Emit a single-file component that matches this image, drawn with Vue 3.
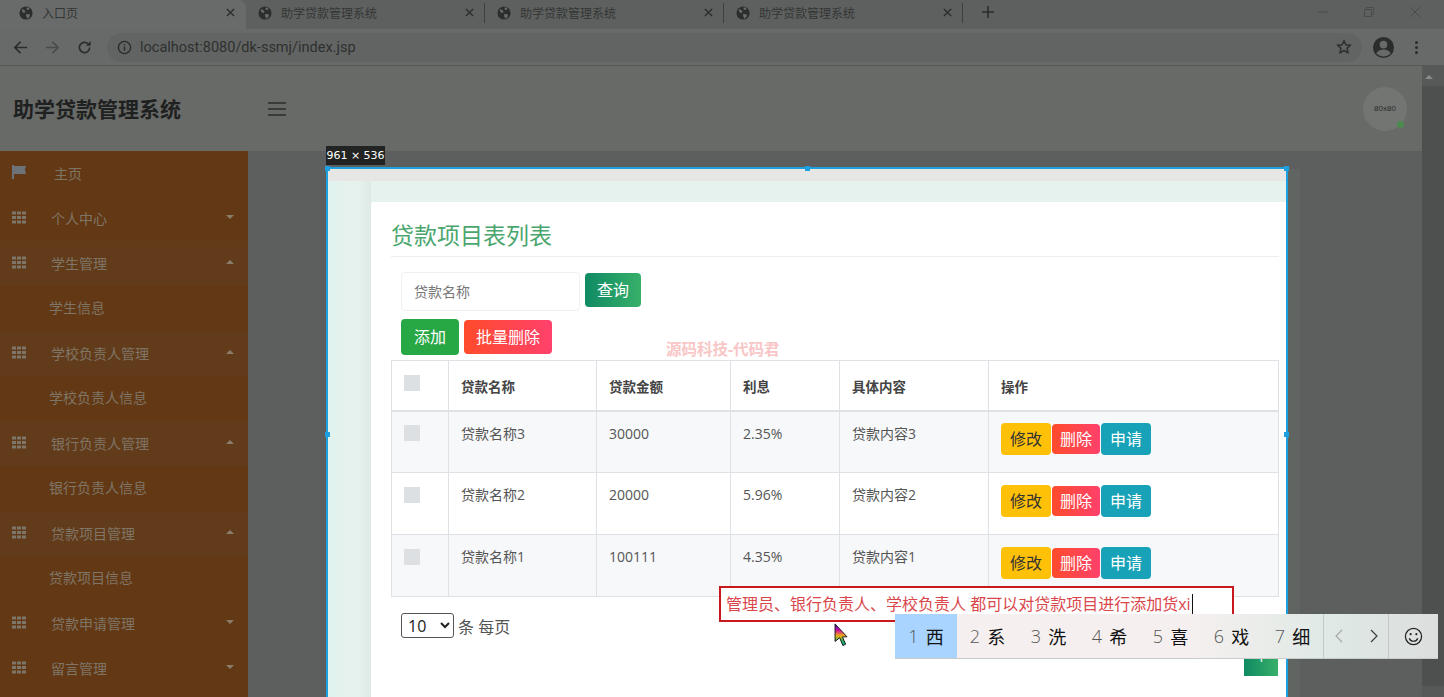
<script setup>
const tabs = [
    { title: '入口页', active: true },
    { title: '助学贷款管理系统' },
    { title: '助学贷款管理系统' },
    { title: '助学贷款管理系统' }
];

const menu = [
    { label: '主页', icon: 'flag', home: true },
    { label: '个人中心', icon: 'grid', arrow: 'down' },
    { label: '学生管理', icon: 'grid', arrow: 'up', open: true },
    { label: '学生信息', sub: true },
    { label: '学校负责人管理', icon: 'grid', arrow: 'up', open: true },
    { label: '学校负责人信息', sub: true },
    { label: '银行负责人管理', icon: 'grid', arrow: 'up', open: true },
    { label: '银行负责人信息', sub: true },
    { label: '贷款项目管理', icon: 'grid', arrow: 'up', open: true },
    { label: '贷款项目信息', sub: true },
    { label: '贷款申请管理', icon: 'grid', arrow: 'down' },
    { label: '留言管理', icon: 'grid', arrow: 'down' }
];

const loans = [
    { name: '贷款名称3', amount: '30000', rate: '2.35%', content: '贷款内容3' },
    { name: '贷款名称2', amount: '20000', rate: '5.96%', content: '贷款内容2' },
    { name: '贷款名称1', amount: '100111', rate: '4.35%', content: '贷款内容1' }
];

const candidates = ['西', '系', '洗', '希', '喜', '戏', '细'];
</script>

<template>
    <div class="screen">
        <div class="tabbar">
            <div v-for="tab in tabs" :key="tab.title + tab.active" :class="['tab', { active: tab.active }]">
                <svg class="globe" viewBox="0 0 16 16">
                    <circle cx="8" cy="8" r="7.5" fill="#2c2e2e" />
                    <path d="M3 3.5l3 1 1.5 2-1.5 1.500-2-1zM9 1.500l3 1-1 2-2.500-.5zM8 9l4 .5.500 2-2.500 3-1.500-2z" fill="#6a6c6b" />
                </svg>
                <span class="tab-title">{{ tab.title }}</span>
                <svg class="tab-close" viewBox="0 0 10 10">
                    <path d="M1 1l8 8M9 1l-8 8" stroke="#2b2d2d" stroke-width="1.500" />
                </svg>
            </div>
            <svg class="new-tab" viewBox="0 0 12 12">
                <path d="M6 0v12M0 6h12" stroke="#2b2d2d" stroke-width="1.600" />
            </svg>
            <div class="win-controls">
                <svg viewBox="0 0 12 12"><path d="M1 6h10" stroke="#4a4c4b" /></svg>
                <svg viewBox="0 0 12 12"><path d="M1.500 3.500h7v7h-7zM3.500 3.500v-2h7v7h-2" fill="none" stroke="#4a4c4b" /></svg>
                <svg viewBox="0 0 12 12"><path d="M1 1l10 10M11 1l-10 10" stroke="#4a4c4b" /></svg>
            </div>
        </div>

        <div class="toolbar">
            <svg class="tool" viewBox="0 0 16 16"><path d="M15 8H2M8 2L2 8l6 6" fill="none" stroke="#2b2d2d" stroke-width="1.800" /></svg>
            <svg class="tool" viewBox="0 0 16 16"><path d="M1 8h13M8 2l6 6-6 6" fill="none" stroke="#4a4c4b" stroke-width="1.800" /></svg>
            <svg class="tool" viewBox="0 0 16 16"><path d="M13.500 8a5.500 5.500 0 1 1-1.600-3.900" fill="none" stroke="#2b2d2d" stroke-width="1.800" /><path d="M14.500 1v5h-5z" fill="#2b2d2d" /></svg>
            <div class="omnibox">
                <svg class="info" viewBox="0 0 16 16">
                    <circle cx="8" cy="8" r="6.500" fill="none" stroke="#2b2d2d" stroke-width="1.500" />
                    <path d="M8 7v4.500M8 4.200v1.500" stroke="#2b2d2d" stroke-width="1.500" />
                </svg>
                <span class="url">localhost:8080/dk-ssmj/index.jsp</span>
                <svg class="star" viewBox="0 0 16 16">
                    <path d="M8 1.800l1.900 4 4.400.5-3.200 3 .8 4.400L8 11.600l-3.900 2.100.8-4.400-3.200-3 4.400-.5z" fill="none" stroke="#2b2d2d" stroke-width="1.400" />
                </svg>
            </div>
            <svg class="profile" viewBox="0 0 24 24">
                <circle cx="12" cy="12" r="11" fill="#2b2d2d" />
                <circle cx="12" cy="9" r="4" fill="#686a69" />
                <path d="M4.500 18c2-3 4.500-4 7.500-4s5.500 1 7.500 4c-2 2.200-4.500 3.300-7.500 3.300s-5.500-1.100-7.500-3.300z" fill="#686a69" />
            </svg>
            <div class="dots"><i></i><i></i><i></i></div>
        </div>

        <div class="page">
            <div class="page-left">
                <header class="header">
                    <div class="brand">助学贷款管理系统</div>
                    <div class="hamburger"><i></i><i></i><i></i></div>
                    <div class="avatar">
                        80x80
                        <span class="online"></span>
                    </div>
                </header>

                <div class="body">
                    <aside class="sidebar">
                        <div
                            v-for="item in menu"
                            :key="item.label"
                            :class="['menu-item', { open: item.open, sub: item.sub, home: item.home }]"
                        >
                            <svg v-if="item.icon === 'flag'" class="menu-icon flag" viewBox="0 0 14 14">
                                <path d="M0 0h2v14H0zM2 1h12l-1 3.500L14 9H2z" fill="#6d7378" />
                            </svg>
                            <svg v-else-if="item.icon === 'grid'" class="menu-icon" viewBox="0 0 14 12">
                                <path d="M0 0h4v3H0zM5 0h4v3H5zM10 0h4v3h-4zM0 4.500h4v3H0zM5 4.500h4v3H5zM10 4.500h4v3h-4zM0 9h4v3H0zM5 9h4v3H5zM10 9h4v3h-4z" fill="#7d7669" />
                            </svg>
                            <span class="menu-label">{{ item.label }}</span>
                            <span v-if="item.arrow" :class="['caret', item.arrow]"></span>
                        </div>
                    </aside>

                    <main class="content">
                        <div class="capture-label">961 × 536</div>
                        <div class="capture">
                            <i class="handle top-left"></i>
                            <i class="handle top-mid"></i>
                            <i class="handle top-right"></i>
                            <i class="handle mid-left"></i>
                            <i class="handle mid-right"></i>
                            <div class="capture-strip"></div>
                            <div class="capture-body">
                                <section class="card">
                                    <h2 class="card-title">贷款项目表列表</h2>
                                    <div class="search-row">
                                        <div class="search-input">贷款名称</div>
                                        <button class="btn btn-query">查询</button>
                                    </div>
                                    <div class="action-row">
                                        <button class="btn btn-add">添加</button>
                                        <button class="btn btn-batch">批量删除</button>
                                    </div>
                                    <div class="watermark">源码科技-代码君</div>
                                    <table class="loan-table">
                                        <colgroup>
                                            <col style="width: 57px" />
                                            <col style="width: 148px" />
                                            <col style="width: 134px" />
                                            <col style="width: 109px" />
                                            <col style="width: 149px" />
                                            <col />
                                        </colgroup>
                                        <thead>
                                            <tr>
                                                <th><span class="check"></span></th>
                                                <th>贷款名称</th>
                                                <th>贷款金额</th>
                                                <th>利息</th>
                                                <th>具体内容</th>
                                                <th>操作</th>
                                            </tr>
                                        </thead>
                                        <tbody>
                                            <tr v-for="loan in loans" :key="loan.name">
                                                <td><span class="check"></span></td>
                                                <td>{{ loan.name }}</td>
                                                <td>{{ loan.amount }}</td>
                                                <td>{{ loan.rate }}</td>
                                                <td>{{ loan.content }}</td>
                                                <td class="ops">
                                                    <button class="op op-edit">修改</button>
                                                    <button class="op op-del">删除</button>
                                                    <button class="op op-apply">申请</button>
                                                </td>
                                            </tr>
                                        </tbody>
                                    </table>
                                    <div class="pager-row">
                                        <select class="page-size">
                                            <option>10</option>
                                        </select>
                                        <span>条 每页</span>
                                    </div>
                                    <div class="pagination"><span class="page-btn">1</span></div>
                                </section>
                            </div>
                        </div>
                    </main>
                </div>
            </div>

            <div class="scrollbar">
                <span class="scroll-up"></span>
                <span class="scroll-thumb"></span>
            </div>
        </div>

        <div class="note">管理员、银行负责人、学校负责人 都可以对贷款项目进行添加货xi<i class="text-caret"></i></div>

        <svg class="mouse" viewBox="0 0 16 26">
            <defs>
                <linearGradient id="mouse-fill" x1="0" y1="0" x2="0" y2="1">
                    <stop offset="0" stop-color="#3a10c0" />
                    <stop offset="0.3" stop-color="#d0109a" />
                    <stop offset="0.55" stop-color="#f0b010" />
                    <stop offset="0.8" stop-color="#20b060" />
                    <stop offset="1" stop-color="#10a0a0" />
                </linearGradient>
            </defs>
            <path d="M1 1l13 14H9l3.500 8-3 1.500L6 16l-5 4z" fill="url(#mouse-fill)" stroke="#111" stroke-width="1" />
        </svg>

        <div class="ime">
            <div
                v-for="(word, i) in candidates"
                :key="word"
                :class="['candidate', { picked: i === 0 }]"
            >
                <span class="num">{{ i + 1 }}</span>
                <span class="word">{{ word }}</span>
            </div>
            <div class="ime-nav">
                <svg viewBox="0 0 8 14"><path d="M7 1L1 7l6 6" fill="none" stroke="#a4aaa8" stroke-width="1.200" /></svg>
                <svg viewBox="0 0 8 14"><path d="M1 1l6 6-6 6" fill="none" stroke="#3c3e3e" stroke-width="1.200" /></svg>
            </div>
            <div class="ime-emoji">
                <svg viewBox="0 0 20 20">
                    <circle cx="10" cy="10" r="8.500" fill="none" stroke="#222" stroke-width="1.300" />
                    <circle cx="7" cy="7.500" r="1.100" fill="#222" />
                    <circle cx="13" cy="7.500" r="1.100" fill="#222" />
                    <path d="M5.500 12c1 2 2.700 3 4.500 3s3.500-1 4.500-3" fill="none" stroke="#222" stroke-width="1.300" />
                </svg>
            </div>
        </div>
    </div>
</template>

<style scoped>
.screen {
    position: relative;
    width: 1444px;
    height: 697px;
    overflow: hidden;
    background: #5c5f5d;
    font-family: "Open Sans", "Noto Sans CJK SC", sans-serif;
    color: #333;
}

.tabbar {
    display: flex;
    align-items: center;
    height: 29px;
    background: #5e605f;
}

.tab {
    position: relative;
    display: flex;
    align-items: center;
    width: 239px;
    height: 29px;
    flex-shrink: 0;
    padding: 0 11px 4px 12px;
    box-sizing: border-box;
}

.tab::after {
    content: "";
    position: absolute;
    right: 0;
    top: 3px;
    width: 1px;
    height: 20px;
    background: #3e403f;
}

.tab:first-child {
    width: 246px;
    padding-left: 19px;
    background: #696b6a;
    border-radius: 0 8px 0 0;
}

.tab:first-child::after {
    display: none;
}

.globe {
    width: 14px;
    height: 14px;
    flex-shrink: 0;
}

.tab-title {
    flex: 1;
    margin-left: 9px;
    font-size: 12px;
    color: #333635;
}

.tab-close {
    width: 9px;
    height: 9px;
}

.new-tab {
    width: 12px;
    height: 12px;
    margin-left: 19px;
    margin-top: -5px;
}

.win-controls {
    display: flex;
    gap: 34px;
    margin-left: auto;
    margin-right: 23px;
    margin-top: -6px;
}

.win-controls svg {
    width: 12px;
    height: 12px;
}

.toolbar {
    display: flex;
    align-items: center;
    height: 37px;
    padding: 0 0 0 13px;
    box-sizing: border-box;
    background: #686a69;
    border-bottom: 1px solid #565857;
}

.tool {
    width: 15px;
    height: 15px;
    margin-right: 17px;
}

.omnibox {
    display: flex;
    align-items: center;
    width: 1255px;
    height: 29px;
    margin-left: -2px;
    padding: 0 9px 0 10px;
    box-sizing: border-box;
    border-radius: 15px;
    background: #626463;
}

.info {
    width: 15px;
    height: 15px;
}

.url {
    flex: 1;
    margin-left: 8px;
    font-family: "Roboto", sans-serif;
    font-size: 14.500px;
    color: #2e302f;
}

.star {
    width: 16px;
    height: 16px;
    margin-right: 1px;
}

.profile {
    width: 23px;
    height: 23px;
    margin-left: 10px;
}

.dots {
    display: flex;
    flex-direction: column;
    gap: 2px;
    margin-left: 20px;
}

.dots i {
    width: 3px;
    height: 3px;
    border-radius: 50%;
    background: #2b2d2d;
}

.page {
    display: flex;
    height: 631px;
}

.page-left {
    width: 1422px;
    flex-shrink: 0;
}

.header {
    display: flex;
    align-items: center;
    height: 85px;
    background: #686a68;
    padding: 0 15px 0 13px;
    box-sizing: border-box;
}

.brand {
    width: 255px;
    margin-top: -2px;
    font-size: 21px;
    font-weight: 700;
    color: #1f2120;
}

.hamburger {
    display: flex;
    flex-direction: column;
    gap: 4px;
}

.hamburger i {
    width: 18px;
    height: 2px;
    background: #3a3c3b;
}

.avatar {
    position: relative;
    display: flex;
    align-items: center;
    justify-content: center;
    width: 44px;
    height: 44px;
    margin-left: auto;
    border-radius: 50%;
    background: #737573;
    font-family: "Liberation Sans", sans-serif;
    font-size: 8px;
    color: #2b2d2c;
}

.online {
    position: absolute;
    right: 3px;
    bottom: 3px;
    width: 7px;
    height: 7px;
    border-radius: 50%;
    background: #4d8a4d;
}

.body {
    display: flex;
    height: 546px;
}

.sidebar {
    width: 248px;
    flex-shrink: 0;
    background: #633814;
}

.menu-item {
    position: relative;
    display: flex;
    align-items: center;
    height: 45px;
    padding: 0 0 2px 12px;
    font-size: 14px;
    color: #7f7566;
    box-sizing: border-box;
}

.menu-item.open {
    background: #623b1a;
}

.menu-icon {
    width: 14px;
    height: 13px;
    margin-top: -1px;
    flex-shrink: 0;
}

.menu-icon.flag {
    height: 14px;
    margin-top: -2px;
}

.menu-label {
    margin-left: 25px;
}

.menu-item.home .menu-label {
    margin-left: 28px;
}

.menu-item.sub {
    padding-left: 49px;
    padding-bottom: 4px;
}

.menu-item.sub .menu-label {
    margin-left: 0;
}

.caret {
    position: absolute;
    right: 14px;
    top: 19px;
    border-left: 4px solid transparent;
    border-right: 4px solid transparent;
}

.caret.down {
    border-top: 4px solid #8a7d6c;
}

.caret.up {
    border-bottom: 4px solid #8a7d6c;
}

.content {
    position: relative;
    flex: 1;
    padding: 16px 0 0 78px;
    background: #5c5f5d;
}

.capture-label {
    position: absolute;
    left: 78px;
    top: -5px;
    width: 59px;
    height: 19px;
    background: #212423;
    color: #fff;
    line-height: 19px;
    text-align: center;
    font-family: "DejaVu Sans", sans-serif;
    white-space: nowrap;
    font-size: 11px;
}

.capture {
    position: relative;
    width: 962px;
    height: 530px;
    border: solid #1d9fe0;
    border-width: 2px 2px 0;
    box-sizing: border-box;
    background: #e6f2ed;
}

.capture::after {
    content: "";
    position: absolute;
    top: 0;
    left: 960px;
    width: 12px;
    height: 100%;
    background: #616562;
}

.handle {
    position: absolute;
    z-index: 2;
    width: 5px;
    height: 5px;
    background: #1d9fe0;
}

.top-left { left: -3px; top: -3px; }
.top-mid { left: 477px; top: -3px; }
.top-right { right: -3px; top: -3px; }
.mid-left { left: -3px; top: 263px; }
.mid-right { right: -3px; top: 263px; }

.capture-strip {
    height: 12px;
    background: #e6e6e4;
}

.capture-body {
    height: 516px;
    padding: 21px 0 0 43px;
    box-sizing: border-box;
    overflow: hidden;
    background: linear-gradient(90deg, #e0f3ef 0, #e6f2ed 20px, #e6f2ed 30px, #dfe9e5 43px, #e6f2ed 43px);
}

.card {
    position: relative;
    width: 928px;
    height: 520px;
    padding: 19px 20px 0 20px;
    box-sizing: border-box;
    background: #fff;
    border-radius: 2px 0 0 0;
}

.card-title {
    margin: 0;
    height: 35px;
    font-size: 23px;
    font-weight: 400;
    line-height: 28px;
    color: #4aa66e;
    border-bottom: 1px solid #eceeef;
    box-sizing: content-box;
}

.search-row {
    display: flex;
    align-items: flex-start;
    gap: 5px;
    margin: 15px 0 0 10px;
}

.search-input {
    width: 179px;
    height: 39px;
    padding-left: 12px;
    box-sizing: border-box;
    border: 1px solid #eef0f1;
    border-radius: 4px;
    font-size: 14px;
    line-height: 37px;
    color: #777;
}

.btn {
    border: none;
    padding: 0 0 2px;
    color: #fff;
    font-family: inherit;
    font-size: 16px;
    border-radius: 4px;
}

.btn-query {
    width: 56px;
    height: 34px;
    margin-top: 1px;
    background: linear-gradient(90deg, #0f8a63, #38b06a);
}

.action-row {
    display: flex;
    align-items: center;
    gap: 5px;
    margin: 8px 0 0 10px;
}

.btn-add {
    width: 58px;
    height: 36px;
    background: #28a745;
}

.btn-batch {
    width: 88px;
    height: 34px;
    background: linear-gradient(90deg, #ff4b2b, #ff416c);
}

.watermark {
    position: absolute;
    left: 295px;
    top: 135px;
    font-size: 15.500px;
    font-weight: 700;
    color: #f9c6c6;
    white-space: nowrap;
}

.loan-table {
    width: 888px;
    margin-top: 5px;
    table-layout: fixed;
    border-collapse: collapse;
    font-size: 14px;
    color: #555;
}

.loan-table th,
.loan-table td {
    padding: 11px 12px;
    border: 1px solid #dee2e6;
    text-align: left;
    vertical-align: top;
    box-sizing: border-box;
}

.loan-table th {
    height: 50px;
    padding-top: 16px;
    font-weight: 700;
    font-size: 13.500px;
    line-height: 20px;
    border-bottom-width: 2px;
    color: #444;
}

.loan-table td {
    height: 62px;
    line-height: 21px;
}

.loan-table th:first-child {
    padding-top: 14px;
}

.loan-table td:first-child {
    padding-top: 14px;
}

.loan-table tbody tr:first-child td:first-child {
    padding-top: 13px;
}

.loan-table tbody tr:nth-child(odd) {
    background: #f7f8fa;
}

.check {
    display: block;
    width: 16px;
    height: 16px;
    background: #dde0e3;
}

.ops {
    font-size: 0;
}

.loan-table td.ops {
    padding: 12px 0 0 12px;
}

.loan-table tbody tr:first-child td.ops {
    padding-top: 11px;
}

.op {
    height: 32px;
    padding: 0 0 2px;
    border: none;
    border-radius: 4px;
    margin-right: 1px;
    font-family: inherit;
    font-size: 16px;
    color: #fff;
    vertical-align: top;
}

.op-edit {
    width: 50px;
    background: #ffc107;
    color: #333;
}

.op-del {
    width: 48px;
    height: 30px;
    margin-top: 1px;
    background: linear-gradient(90deg, #ff4b2b, #ff416c);
}

.op-apply {
    width: 50px;
    background: #17a2b8;
}

.pager-row {
    display: flex;
    align-items: center;
    gap: 4px;
    height: 25px;
    margin: 16px 0 0 10px;
    font-size: 16px;
    color: #555;
}

.page-size {
    width: 53px;
    height: 25px;
    padding: 0 0 0 2px;
    border: 1px solid #555;
    border-radius: 3px;
    background: #fff;
    font-family: "Open Sans", sans-serif;
    font-size: 16px;
    color: #222;
}

.pagination {
    display: flex;
    justify-content: flex-end;
    margin-top: 0;
    padding-right: 1px;
}

.page-btn {
    display: block;
    width: 34px;
    height: 38px;
    background: linear-gradient(90deg, #0f8a63, #38b06a);
    color: #fff;
    font-size: 14px;
    line-height: 38px;
    text-align: center;
}

.scrollbar {
    position: relative;
    flex: 1;
    background: #565958;
}

.scroll-up {
    position: absolute;
    left: 3px;
    top: 9px;
    border-left: 4px solid transparent;
    border-right: 4px solid transparent;
    border-bottom: 4px solid #8a8c8b;
}

.scroll-thumb {
    position: absolute;
    left: 0;
    right: 0;
    top: 20px;
    height: 600px;
    background: #4e504f;
}

.note {
    position: absolute;
    left: 719px;
    top: 586px;
    width: 515px;
    height: 36px;
    padding-left: 5px;
    box-sizing: border-box;
    border: 2px solid #c8181c;
    background: #fff;
    font-size: 16px;
    line-height: 32px;
    color: #d9474b;
    white-space: nowrap;
}

.text-caret {
    display: inline-block;
    width: 1px;
    height: 20px;
    margin-left: 1px;
    vertical-align: -4px;
    background: #111;
}

.mouse {
    position: absolute;
    left: 834px;
    top: 623px;
    width: 15px;
    height: 24px;
}

.ime {
    position: absolute;
    left: 895px;
    top: 614px;
    display: flex;
    width: 543px;
    height: 45px;
    background: linear-gradient(90deg, #f5f0ef 0, #f5f0ef 55%, #dfe9e5 80%, #dcdedd 100%);
    border-bottom: 1px solid #c8cccb;
    box-sizing: border-box;
}

.candidate {
    display: flex;
    align-items: center;
    justify-content: center;
    gap: 7px;
    width: 61px;
    font-size: 18px;
    color: #111;
}

.candidate.picked {
    width: 62px;
    background: #a8d4ff;
}

.num {
    font-family: "Open Sans", sans-serif;
    font-weight: 300;
    color: #555;
}

.ime-nav {
    display: flex;
    align-items: center;
    justify-content: space-between;
    width: 66px;
    padding: 0 10px 0 11px;
    box-sizing: border-box;
    border-left: 1px solid #c4c9c7;
    border-right: 1px solid #c4c9c7;
}

.ime-nav svg {
    width: 8px;
    height: 14px;
}

.ime-emoji {
    display: flex;
    align-items: center;
    justify-content: center;
    flex: 1;
}

.ime-emoji svg {
    width: 19px;
    height: 19px;
}
</style>
